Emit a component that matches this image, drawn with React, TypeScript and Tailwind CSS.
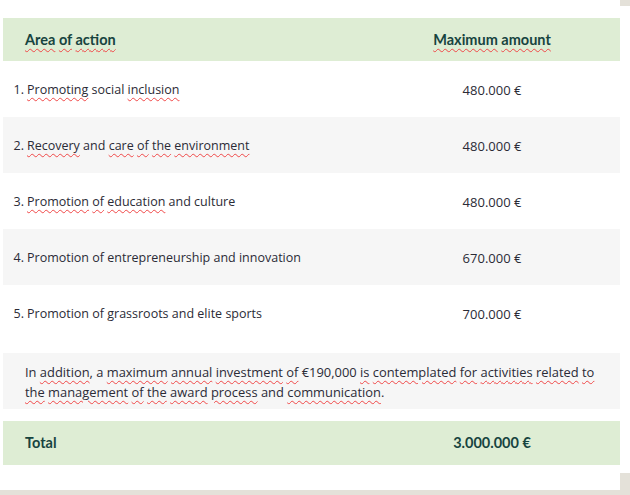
const rows = [
  { n: '1.', text: [['Promoting', true], [' social ', false], ['inclusion', true]], amount: '480.000 €' },
  {
    n: '2.',
    text: [['Recovery', true], [' and ', false], ['care', true], [' ', false], ['of', true], [' ', false], ['the', true], [' ', false], ['environment', true]],
    amount: '480.000 €',
  },
  { n: '3.', text: [['Promotion', true], [' ', false], ['of', true], [' ', false], ['education', true], [' and culture', false]], amount: '480.000 €' },
  { n: '4.', text: [['Promotion of entrepreneurship and innovation', false]], amount: '670.000 €' },
  { n: '5.', text: [['Promotion of grassroots and elite sports', false]], amount: '700.000 €' },
] as const

function Sq({ children }: { children: React.ReactNode }) {
  return (
    <span className="underline decoration-wavy decoration-[#f04848] decoration-1 underline-offset-[3px]">{children}</span>
  )
}

function Words({ parts }: { parts: readonly (readonly [string, boolean])[] }) {
  return (
    <>
      {parts.map(([w, s], i) => (s ? <Sq key={i}>{w}</Sq> : <span key={i}>{w}</span>))}
    </>
  )
}

const para1: [string, boolean][] = [
  ['In ', false], ['addition', true], [', a ', false], ['maximum', true], [' ', false], ['annual', true], [' ', false],
  ['investment', true], [' ', false], ['of', true], [' €190,000 ', false], ['is', true], [' ', false], ['contemplated', true],
  [' ', false], ['for', true], [' ', false], ['activities', true], [' ', false], ['related', true], [' ', false], ['to', true],
]
const para2: [string, boolean][] = [
  ['the', true], [' ', false], ['management', true], [' ', false], ['of', true], [' ', false], ['the', true], [' ', false],
  ['award', true], [' ', false], ['process', true], [' and ', false], ['communication', true], ['.', false],
]

export default function App() {
  return (
    <div className="w-[630px] h-[495px] bg-white flex flex-col overflow-hidden">
      <div className="flex h-[490px]">
        <div className="w-[620px] pt-[18px] pl-[3px]">
          <div className="font-['Lato',sans-serif] font-bold text-[14.5px] text-[#17443f] bg-[#deedd4] h-[43px] grid grid-cols-[361px_256px] items-center">
            <div className="pl-[22px]">
              <Sq>Area</Sq> <Sq>of</Sq> <Sq>action</Sq>
            </div>
            <div className="text-center">
              <Sq>Maximum</Sq> <Sq>amount</Sq>
            </div>
          </div>
          <div className="font-['Open_Sans',sans-serif] text-[12.5px] text-[#2b2b36]">
            {rows.map((r, i) => (
              <div
                key={i}
                className={`h-[56px] pt-[3px] grid grid-cols-[361px_256px] items-center ${i % 2 === 1 ? 'bg-[#f6f6f6]' : 'bg-white'}`}
              >
                <div className="flex">
                  <span className="inline-block w-[21px] text-right">{r.n}</span>
                  <span className="ml-[3px]">
                    <Words parts={r.text as unknown as [string, boolean][]} />
                  </span>
                </div>
                <div className="text-center text-[13px]">{r.amount}</div>
              </div>
            ))}
            <div className="mt-[12px] h-[56px] pt-[1px] bg-[#f6f6f6] pl-[22px] flex flex-col justify-center leading-[20px] text-[12.9px] whitespace-nowrap">
              <div>
                <Words parts={para1} />
              </div>
              <div>
                <Words parts={para2} />
              </div>
            </div>
          </div>
          <div className="mt-[12px] font-['Lato',sans-serif] font-bold text-[14.5px] text-[#17443f] bg-[#deedd4] h-[44px] grid grid-cols-[361px_256px] items-center">
            <div className="pl-[22px]">Total</div>
            <div className="text-center">3.000.000 €</div>
          </div>
        </div>
        <div className="w-[10px] flex flex-col">
          <div className="h-[6px] bg-[#e4e1d9]" />
          <div className="flex-1 bg-white" />
          <div className="h-[17px] bg-[#e4e1d9]" />
        </div>
      </div>
      <div className="h-[5px] bg-[#e4e1d9]" />
    </div>
  )
}
